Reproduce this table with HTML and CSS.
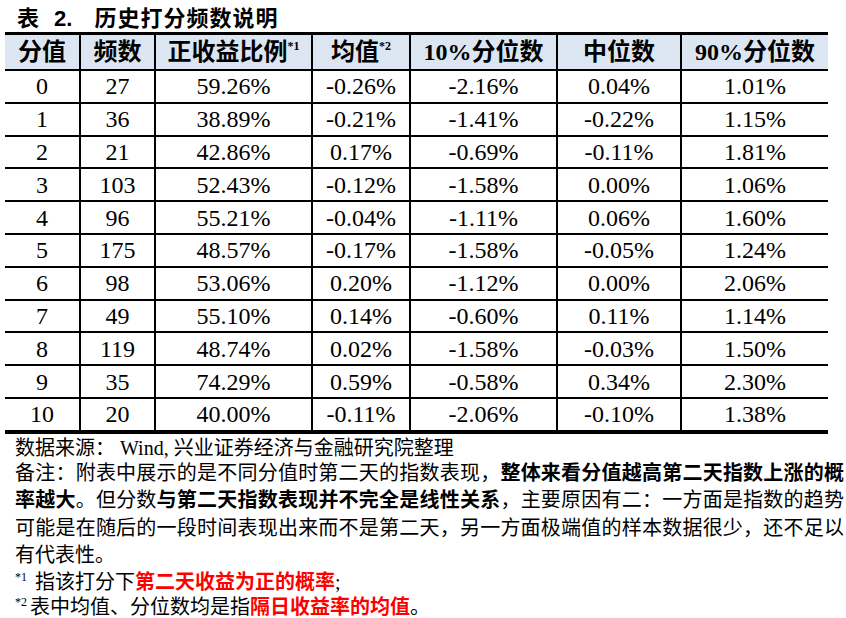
FILE: index.html
```html
<!DOCTYPE html>
<html lang="zh-CN">
<head>
<meta charset="utf-8">
<title>表 2. 历史打分频数说明</title>
<link rel="stylesheet" href="styles.css">
</head>
<body>
<div class="page">
  <div class="title"><span class="t-biao">表</span><span class="t-num">2.</span><span class="t-name">历史打分频数说明</span></div>
  <table class="tbl">
    <colgroup>
      <col class="c1"><col class="c2"><col class="c3"><col class="c4"><col class="c5"><col class="c6"><col class="c7">
    </colgroup>
    <thead>
      <tr><th>分值</th><th>频数</th><th>正收益比例<sup>*1</sup></th><th>均值<sup>*2</sup></th><th>10%分位数</th><th>中位数</th><th>90%分位数</th></tr>
    </thead>
    <tbody>
      <tr><td>0</td><td>27</td><td>59.26%</td><td>-0.26%</td><td>-2.16%</td><td>0.04%</td><td>1.01%</td></tr>
      <tr><td>1</td><td>36</td><td>38.89%</td><td>-0.21%</td><td>-1.41%</td><td>-0.22%</td><td>1.15%</td></tr>
      <tr><td>2</td><td>21</td><td>42.86%</td><td>0.17%</td><td>-0.69%</td><td>-0.11%</td><td>1.81%</td></tr>
      <tr><td>3</td><td>103</td><td>52.43%</td><td>-0.12%</td><td>-1.58%</td><td>0.00%</td><td>1.06%</td></tr>
      <tr><td>4</td><td>96</td><td>55.21%</td><td>-0.04%</td><td>-1.11%</td><td>0.06%</td><td>1.60%</td></tr>
      <tr><td>5</td><td>175</td><td>48.57%</td><td>-0.17%</td><td>-1.58%</td><td>-0.05%</td><td>1.24%</td></tr>
      <tr><td>6</td><td>98</td><td>53.06%</td><td>0.20%</td><td>-1.12%</td><td>0.00%</td><td>2.06%</td></tr>
      <tr><td>7</td><td>49</td><td>55.10%</td><td>0.14%</td><td>-0.60%</td><td>0.11%</td><td>1.14%</td></tr>
      <tr><td>8</td><td>119</td><td>48.74%</td><td>0.02%</td><td>-1.58%</td><td>-0.03%</td><td>1.50%</td></tr>
      <tr><td>9</td><td>35</td><td>74.29%</td><td>0.59%</td><td>-0.58%</td><td>0.34%</td><td>2.30%</td></tr>
      <tr><td>10</td><td>20</td><td>40.00%</td><td>-0.11%</td><td>-2.06%</td><td>-0.10%</td><td>1.38%</td></tr>
    </tbody>
  </table>
  <div class="notes">
    <div class="src">数据来源： Wind, 兴业证券经济与金融研究院整理</div>
    <div class="line just">备注：附表中展示的是不同分值时第二天的指数表现，<b>整体来看分值越高第二天指数上涨的概</b></div>
    <div class="line just"><b>率越大</b>。但分数<b>与第二天指数表现并不完全是线性关系</b>，主要原因有二：一方面是指数的趋势</div>
    <div class="line just">可能是在随后的一段时间表现出来而不是第二天，另一方面极端值的样本数据很少，还不足以</div>
    <div class="line">有代表性。</div>
    <div class="fn"><sup class="fsup">*1</sup><span class="fn1">指该打分下<b class="red">第二天收益为正的概率</b>;</span></div>
    <div class="fn"><sup class="fsup">*2</sup><span class="fn2">表中均值、分位数均是指<b class="red">隔日收益率的均值</b>。</span></div>
  </div>
</div>
</body>
</html>
```
FILE: styles.css
```css
html, body {
  margin: 0;
  padding: 0;
  background: #ffffff;
}
body {
  font-family: "Liberation Serif", "Noto Sans CJK SC", serif;
  color: #000;
  width: 846px;
}
.page {
  padding: 0;
}
.title {
  height: 32px;
  line-height: 32px;
  padding-left: 17px;
  font-size: 22px;
  font-weight: bold;
  font-family: "Noto Sans CJK SC", sans-serif;
  white-space: nowrap;
}
.t-num {
  font-family: "Liberation Sans", sans-serif;
  margin-left: 15px;
}
.t-name {
  margin-left: 22px;
  letter-spacing: 1px;
}
.tbl {
  margin-left: 5px;
  width: 823px;
  border-collapse: collapse;
  table-layout: fixed;
  border-top: 3px solid #000;
  border-bottom: 4px solid #000;
}
.c1 { width: 75px; }
.c2 { width: 75px; }
.c3 { width: 157px; }
.c4 { width: 98px; }
.c5 { width: 147px; }
.c6 { width: 124px; }
.c7 { width: 147px; }
.tbl th, .tbl td {
  border: 2px solid #000;
  padding: 0;
  text-align: center;
  vertical-align: middle;
  white-space: nowrap;
}
.tbl th:first-child, .tbl td:first-child { border-left: none; }
.tbl th:last-child, .tbl td:last-child { border-right: none; }
.tbl thead tr:first-child th { border-top: 3px solid #000; }
.tbl tbody tr:last-child td { border-bottom: 4px solid #000; }
.tbl th {
  background: #dce6f2;
  font-size: 24px;
  font-weight: bold;
  height: 34px;
  line-height: 30px;
}
.tbl th sup {
  font-size: 12px;
  line-height: 0;
  vertical-align: 10px;
}
.tbl td {
  font-size: 24px;
  height: 30.8px;
  line-height: 28px;
}
.notes {
  padding-left: 15px;
  width: 829px;
  font-size: 20px;
  font-family: "Liberation Serif", "Noto Sans CJK SC", serif;
}
.src {
  height: 26px;
  line-height: 28px;
  font-size: 20px;
}
.line {
  height: 27.5px;
  line-height: 27.5px;
  white-space: nowrap;
}
.line.just {
  text-align: justify;
  text-align-last: justify;
  white-space: normal;
}
.notes b {
  font-weight: bold;
}
.fn {
  height: 25px;
  line-height: 25px;
  white-space: nowrap;
}
.fsup {
  font-size: 12px;
  line-height: 0;
  vertical-align: 8px;
}
.fn1 { margin-left: 8px; }
.fn2 { margin-left: 3px; }
.red {
  color: #ff0000;
}
```
